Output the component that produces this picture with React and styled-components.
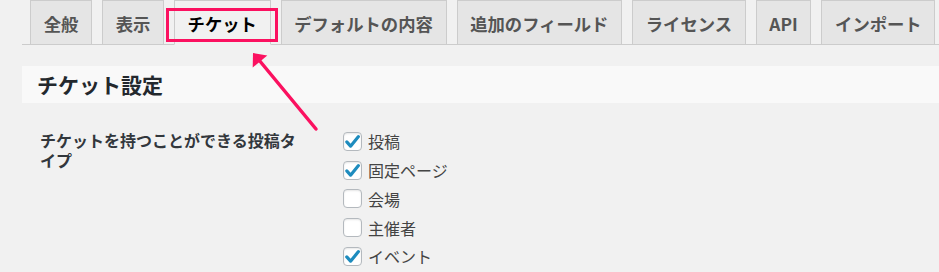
import React from 'react'
import styled, { createGlobalStyle } from 'styled-components'

const GlobalStyle = createGlobalStyle`
  html, body {
    margin: 0;
    padding: 0;
    background: #f1f1f1;
  }
  body {
    font-family: "Noto Sans CJK JP", "Noto Sans", sans-serif;
    color: #23282d;
  }
`

const Page = styled.div`
  position: relative;
  height: 272px;
  overflow: hidden;
  padding-left: 22px;
`

const TabBar = styled.nav`
  display: flex;
  gap: 10px;
  height: 44px;
  padding-left: 8px;
  border-bottom: 1px solid #ccc;
`

const Tab = styled.a`
  position: relative;
  box-sizing: border-box;
  height: 45px;
  margin-bottom: -1px;
  padding: 2px 12.67px 0;
  border: 1px solid #ccc;
  border-bottom-color: ${p => (p.$active ? '#f1f1f1' : '#ccc')};
  background: ${p => (p.$active ? '#f1f1f1' : '#e5e5e5')};
  color: ${p => (p.$active ? '#000' : '#555')};
  font-size: 17.33px;
  font-weight: 700;
  line-height: 41px;
  white-space: nowrap;
  text-decoration: none;
`

const Highlight = styled.span`
  position: absolute;
  left: -9px;
  top: 7px;
  width: 112px;
  height: 34px;
  box-sizing: border-box;
  border: 3px solid #fb1160;
  pointer-events: none;
`

const SectionTitle = styled.h2`
  margin: 21px 0 0;
  height: 37px;
  padding-left: 15px;
  background: #f9f9f9;
  font-size: 21px;
  font-weight: 700;
  line-height: 37px;
  color: #23282d;
`

const SettingRow = styled.div`
  display: flex;
  margin-top: 24px;
  padding-left: 18px;
`

const SettingLabel = styled.div`
  width: 262px;
  margin-right: 41px;
  margin-top: 3px;
  font-size: 16px;
  font-weight: 700;
  line-height: 20px;
  color: #32373c;
`

const OptionList = styled.div`
  display: flex;
  flex-direction: column;
`

const Option = styled.label`
  display: flex;
  align-items: center;
  gap: 6px;
  height: 28.75px;
  font-size: 16px;
  color: #444;
`

const Box = styled.span`
  display: flex;
  align-items: center;
  justify-content: center;
  box-sizing: border-box;
  width: 19px;
  height: 19px;
  border: 1px solid #b4b9be;
  border-radius: 4px;
  background: #fff;
  box-shadow: inset 0 1px 2px rgba(0, 0, 0, 0.1);
`

const Overlay = styled.svg`
  position: absolute;
  left: 0;
  top: 0;
  pointer-events: none;
`

const tabs = ['全般', '表示', 'チケット', 'デフォルトの内容', '追加のフィールド', 'ライセンス', 'API', 'インポート']

const postTypes = [
  { name: '投稿', checked: true },
  { name: '固定ページ', checked: true },
  { name: '会場', checked: false },
  { name: '主催者', checked: false },
  { name: 'イベント', checked: true },
]

function Checkbox({ checked }) {
  return (
    <Box>
      {checked && (
        <svg width="17" height="17" viewBox="0 0 16 16">
          <path d="M2.6 8.4l3.6 4L13.6 3.4" fill="none" stroke="#1e8cbe" strokeWidth="3" strokeLinecap="round" strokeLinejoin="round" />
        </svg>
      )}
    </Box>
  )
}

export default function App() {
  return (
    <>
      <GlobalStyle />
      <Page>
        <TabBar>
          {tabs.map(t => (
            <Tab key={t} $active={t === 'チケット'}>
              {t}
              {t === 'チケット' && <Highlight />}
            </Tab>
          ))}
        </TabBar>

        <SectionTitle>チケット設定</SectionTitle>

        <SettingRow>
          <SettingLabel>チケットを持つことができる投稿タイプ</SettingLabel>
          <OptionList>
            {postTypes.map(pt => (
              <Option key={pt.name}>
                <Checkbox checked={pt.checked} />
                {pt.name}
              </Option>
            ))}
          </OptionList>
        </SettingRow>

        {/* annotation arrow pointing at the highlighted tab */}
        <Overlay width="939" height="272">
          <line x1="316" y1="129" x2="259" y2="60" stroke="#fb1160" strokeWidth="3.5" strokeLinecap="round" />
          <polygon points="253,53 267.3,55.4 252.7,67.6" fill="#fb1160" />
        </Overlay>
      </Page>
    </>
  )
}
